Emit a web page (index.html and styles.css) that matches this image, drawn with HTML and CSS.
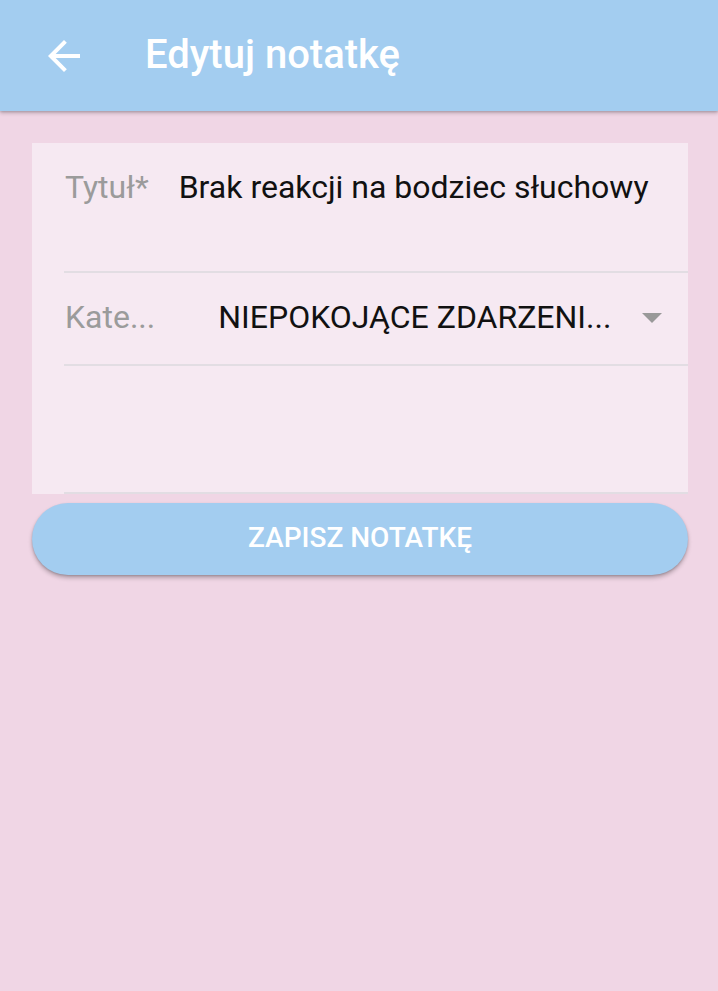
FILE: index.html
```html
<!DOCTYPE html>
<html lang="pl">
<head>
<meta charset="utf-8">
<title>Edytuj notatkę</title>
<link rel="stylesheet" href="styles.css">
</head>
<body>
<header class="appbar">
  <button class="back" aria-label="Wstecz">
    <svg viewBox="0 0 24 24" width="48" height="48"><path d="M20 11H7.83l5.59-5.59L12 4l-8 8 8 8 1.41-1.41L7.83 13H20v-2z" fill="#fff"/></svg>
  </button>
  <h1 class="title">Edytuj notatkę</h1>
</header>
<main class="content">
  <section class="card">
    <div class="field field-title">
      <span class="label">Tytuł*</span>
      <span class="value">Brak reakcji na bodziec słuchowy</span>
    </div>
    <div class="field field-cat">
      <span class="label">Kate...</span>
      <span class="value select">NIEPOKOJĄCE ZDARZENI...</span>
      <span class="caret"></span>
    </div>
    <div class="field field-body"></div>
  </section>
  <button class="save">ZAPISZ NOTATKĘ</button>
</main>
</body>
</html>
```
FILE: styles.css
```css
* { box-sizing: border-box; }
html, body { margin: 0; padding: 0; }
body {
  background: #f0d6e5;
  font-family: Roboto, "Noto Sans", sans-serif;
  width: 718px;
  min-height: 991px;
}
.appbar {
  height: 111px;
  background: #a3cdf0;
  display: flex;
  align-items: center;
  box-shadow: 0 2px 4px rgba(0,0,0,0.22), 0 1px 2px rgba(0,0,0,0.12);
  position: relative;
  z-index: 1;
}
.back {
  margin-left: 40px;
  width: 48px;
  height: 48px;
  padding: 0;
  border: 0;
  background: none;
  display: flex;
}
.title {
  margin: 0 0 0 57px;
  color: #fff;
  font-size: 40px;
  font-weight: 500;
  line-height: 1;
  padding-bottom: 2px;
}
.content {
  padding: 32px 30px 0 32px;
}
.card {
  background: #f6e9f2;
  padding-left: 32px;
  display: flex;
  flex-direction: column;
}
.field {
  display: flex;
  align-items: flex-start;
  border-bottom: 2px solid #e2dde3;
  font-size: 32px;
  line-height: 37px;
}
.field-title {
  height: 130px;
  padding-top: 26px;
}
.field-cat {
  height: 93px;
  padding-top: 26px;
}
.field-body {
  height: 128px;
}
.label {
  color: #9b9b9b;
  padding-left: 1px;
}
.value {
  color: #111;
}
.field-title .value { margin-left: 30px; }
.field-cat .value { margin-left: 63px; flex: 1; white-space: nowrap; }
.caret {
  width: 0;
  height: 0;
  border-left: 10px solid transparent;
  border-right: 10px solid transparent;
  border-top: 10px solid #999;
  margin-right: 26px;
  margin-top: 14px;
}
.save {
  display: block;
  width: 656px;
  height: 72px;
  margin-top: 9px;
  border: 0;
  border-radius: 36px;
  background: #a3cdf0;
  color: #fff;
  font-family: Roboto, "Noto Sans", sans-serif;
  font-size: 28px;
  font-weight: 500;
  box-shadow: 0 3px 4px rgba(0,0,0,0.25), 0 1px 2px rgba(0,0,0,0.15);
  padding: 0 0 3px;
}
```
